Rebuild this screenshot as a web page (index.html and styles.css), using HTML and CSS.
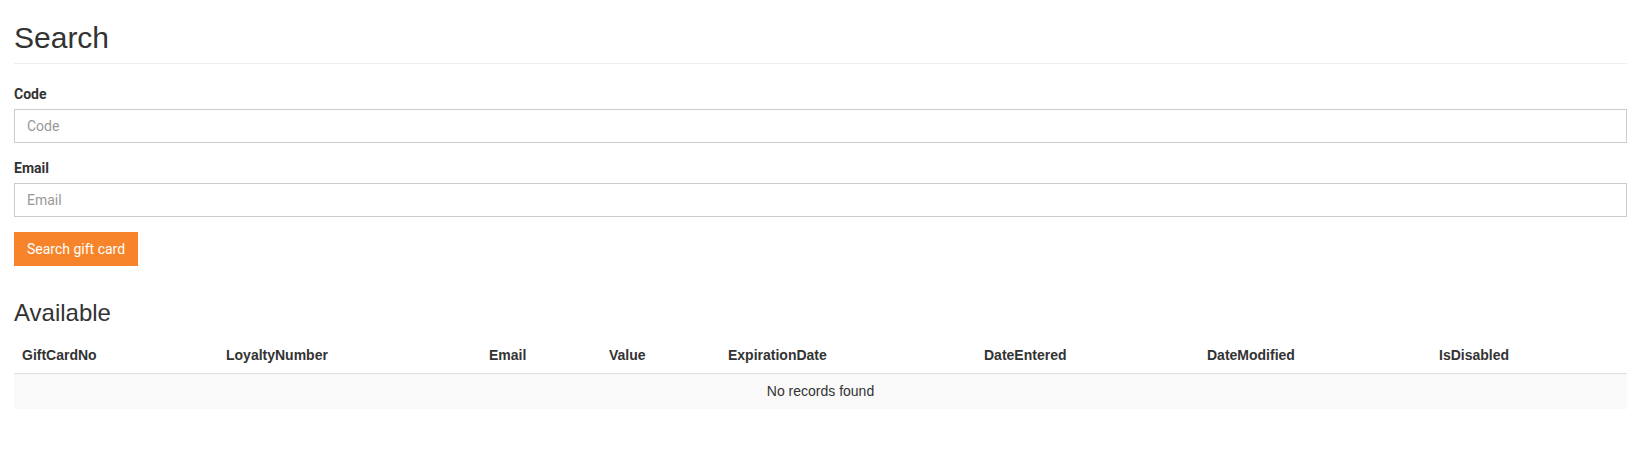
FILE: index.html
```html
<!DOCTYPE html>
<html>
<head>
<meta charset="utf-8">
<link rel="stylesheet" href="styles.css">
</head>
<body>
<div class="page">
  <div class="page-header">
    <h1 class="title">Search</h1>
  </div>
  <form class="search-form">
    <div class="form-group">
      <label class="field-label" for="code">Code</label>
      <input class="field-input" id="code" type="text" placeholder="Code">
    </div>
    <div class="form-group">
      <label class="field-label" for="email">Email</label>
      <input class="field-input" id="email" type="text" placeholder="Email">
    </div>
    <button class="btn-search" type="button">Search gift card</button>
  </form>
  <h3 class="subtitle">Available</h3>
  <table class="grid">
    <colgroup>
      <col class="c1"><col class="c2"><col class="c3"><col class="c4">
      <col class="c5"><col class="c6"><col class="c7"><col class="c8">
    </colgroup>
    <thead>
      <tr>
        <th>GiftCardNo</th>
        <th>LoyaltyNumber</th>
        <th>Email</th>
        <th>Value</th>
        <th>ExpirationDate</th>
        <th>DateEntered</th>
        <th>DateModified</th>
        <th>IsDisabled</th>
      </tr>
    </thead>
    <tbody>
      <tr class="empty-row">
        <td colspan="8">No records found</td>
      </tr>
    </tbody>
  </table>
</div>
</body>
</html>
```

FILE: styles.css
```css
* { box-sizing: border-box; }

html, body {
  margin: 0;
  padding: 0;
  background: #fff;
}

body {
  font-family: "Liberation Sans", Arial, sans-serif;
  font-size: 14px;
  line-height: 20px;
  color: #333;
}

.page {
  padding: 0 9px 0 14px;
}

.page-header {
  padding-top: 21px;
  padding-bottom: 9px;
  border-bottom: 1px solid #eee;
  margin-bottom: 20px;
}

.title {
  margin: 0;
  font-family: "Liberation Sans", Arial, sans-serif;
  font-weight: 400;
  font-size: 30px;
  line-height: 33px;
  color: #333;
}

.search-form {
  margin: 0;
}

.form-group {
  margin-bottom: 15px;
}

.field-label {
  display: block;
  margin-bottom: 5px;
  font-family: Roboto, "Liberation Sans", sans-serif;
  font-weight: 700;
  font-size: 14px;
  line-height: 20px;
  color: #333;
}

.field-input {
  display: block;
  width: 100%;
  height: 34px;
  padding: 6px 12px;
  border: 1px solid #ccc;
  border-radius: 0;
  background: #fff;
  font-family: Roboto, "Liberation Sans", sans-serif;
  font-size: 14px;
  line-height: 20px;
  color: #555;
  outline: none;
}

.field-input::placeholder {
  color: #999;
}

.btn-search {
  display: block;
  margin-top: 15px;
  height: 34px;
  padding: 6px 12px;
  border: 1px solid #f7842a;
  border-radius: 0;
  background: #f7842a;
  color: #fff;
  font-family: Roboto, "Liberation Sans", sans-serif;
  font-size: 14px;
  line-height: 20px;
  cursor: pointer;
}

.subtitle {
  margin: 34px 0 11px;
  font-family: "Liberation Sans", Arial, sans-serif;
  font-weight: 400;
  font-size: 24px;
  line-height: 26px;
  color: #333;
}

.grid {
  width: 100%;
  table-layout: fixed;
  border-collapse: collapse;
  border-spacing: 0;
}

.c1 { width: 204px; }
.c2 { width: 263px; }
.c3 { width: 120px; }
.c4 { width: 119px; }
.c5 { width: 256px; }
.c6 { width: 223px; }
.c7 { width: 232px; }
.c8 { width: 196px; }

.grid th {
  padding: 8px;
  text-align: left;
  font-family: "Liberation Sans", Arial, sans-serif;
  font-weight: 700;
  font-size: 14px;
  line-height: 20px;
  color: #333;
  border-bottom: 1px solid #ddd;
}

.empty-row td {
  padding: 8px;
  text-align: center;
  background: #f9f9f9;
  color: #333;
  font-family: "Liberation Sans", Arial, sans-serif;
  font-size: 14px;
  line-height: 19px;
}
```
